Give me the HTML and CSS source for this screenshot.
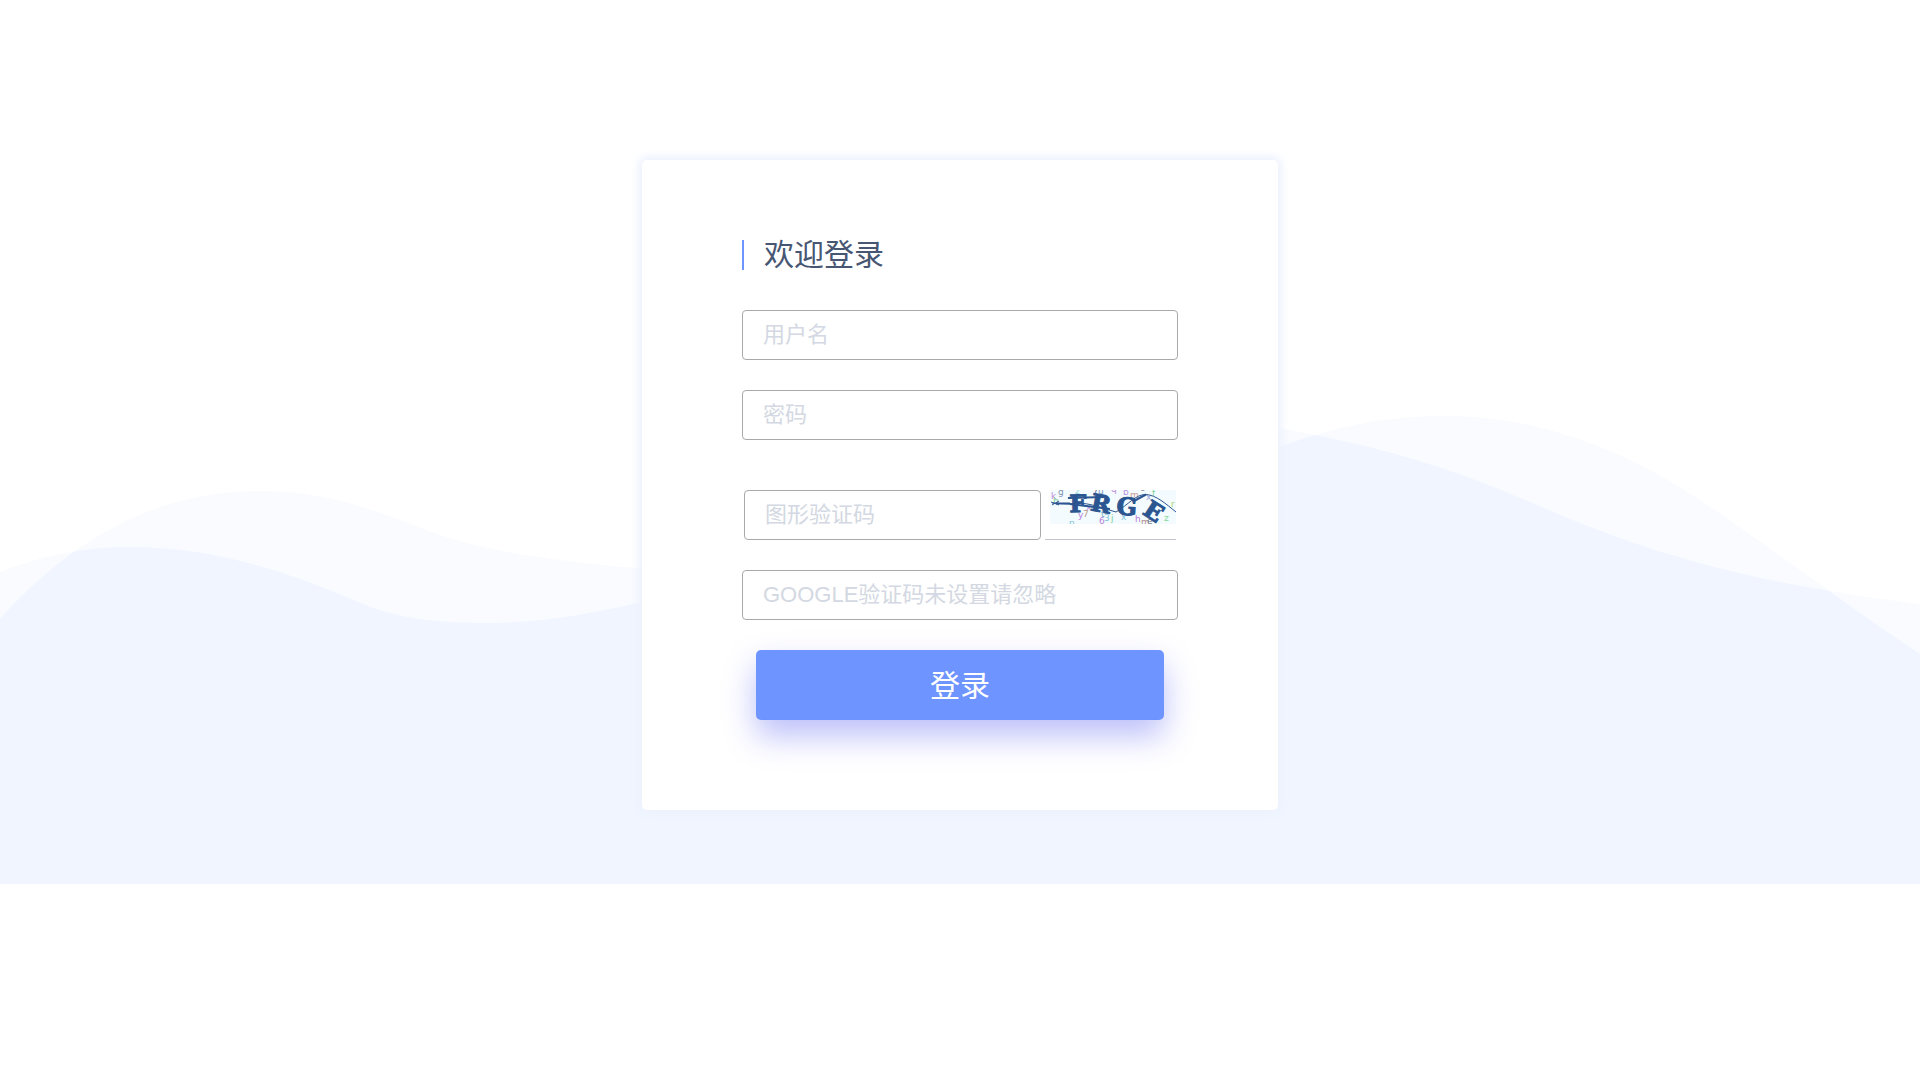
FILE: index.html
```html
<!DOCTYPE html>
<html lang="zh-CN">
<head>
    <meta charset="UTF-8">
    <meta name="viewport" content="width=device-width, initial-scale=1.0">
    <title>登录</title>
    <link rel="stylesheet" href="styles.css">
</head>
<body>
    <!-- Background waves -->
    <svg class="waves" viewBox="0 0 1920 884" aria-hidden="true">
        <defs>
            <path id="waveA" d="M0 619C80 530 165 491 263 491C325 491 378 511 421 528C470 548 540 560 636 568C850 580 1080 390 1284 429C1357 442 1430 461 1496 488C1590 526 1680 575 1920 604V884H0Z"/>
            <path id="waveB" d="M0 572C45 554 88 547 130 547C210 547 285 570 358 602C395 618 435 623 485 623C540 623 590 614 638 603C850 550 1100 500 1285 445C1340 425 1390 416 1445 416C1540 416 1620 450 1681 488C1760 538 1835 598 1920 654V884H0Z"/>
            <clipPath id="clipA"><use href="#waveA"/></clipPath>
        </defs>
        <use class="wave-light" href="#waveA"/>
        <use class="wave-light" href="#waveB"/>
        <use class="wave-deep" href="#waveB" clip-path="url(#clipA)"/>
    </svg>

    <main class="login-box">
        <h1 class="title">欢迎登录</h1>
        <form class="login-form">
            <input class="field" type="text" name="username" placeholder="用户名" aria-label="用户名">
            <input class="field" type="password" name="password" placeholder="密码" aria-label="密码">
            <div class="captcha-row">
                <input class="field" type="text" name="captcha" placeholder="图形验证码" aria-label="图形验证码">
                <button class="captcha" type="button" aria-label="刷新验证码">
                    <svg width="126" height="34" viewBox="0 0 126 34">
                        <rect width="126" height="34" fill="#f3fbfe"/>
                        <g class="noise">
                            <text x="1" y="9" fill="#c08bdc">k</text>
                            <text x="3" y="14" fill="#7fd09a">h</text>
                            <text x="8" y="5" fill="#8094b4">g</text>
                            <text x="25" y="4" fill="#8ccfd4">z</text>
                            <text x="42" y="6" fill="#7d6f96">7</text>
                            <text x="48" y="4" fill="#7a9cc4">u</text>
                            <text x="61" y="2" fill="#c08bdc">q</text>
                            <text x="73" y="5" fill="#b994e0">b</text>
                            <text x="80" y="8" fill="#c99a92">m</text>
                            <text x="90" y="1" fill="#8a8a9a">o</text>
                            <text x="102" y="6" fill="#7fd09a">f</text>
                            <text x="121" y="17" fill="#a4d86c">r</text>
                            <text x="96" y="10" fill="#9aa4e0">x</text>
                            <text x="36" y="20" fill="#c08bdc">x</text>
                            <text x="28" y="28" fill="#b97fd8">y</text>
                            <text x="33" y="27" fill="#b99a8c">7</text>
                            <text x="19" y="36" fill="#7fc4dc">n</text>
                            <text x="51" y="27" fill="#6fa8c8">t</text>
                            <text x="49" y="34" fill="#b97fd8">6</text>
                            <text x="54" y="31" fill="#7fc4dc">3</text>
                            <text x="61" y="31" fill="#7fd09a">j</text>
                            <text x="71" y="30" fill="#7fc4dc">x</text>
                            <text x="85" y="32" fill="#b97fd8">h</text>
                            <text x="91" y="35" fill="#b08a8a">m</text>
                            <text x="97" y="34" fill="#6f7f8f">e</text>
                            <text x="114" y="31" fill="#7fdc9a">z</text>
                        </g>
                        <path class="strike" d="M1 12L9 15M2 15L9 11M2 13L20 14C36 11 48 17 66 22C78 15 86 4 96 4.500C106 5 116 14 126 22"/>
                        <path class="strike-bold" d="M6 13.500L20 13.500M18 8L54 7M20 14L60 19M84 11L96 4.500"/>
                        <g class="code">
                            <text x="28" y="22" transform="rotate(-1 28 14)">F</text>
                            <text x="51" y="22" transform="rotate(10 51 14)">R</text>
                            <text x="77" y="25" transform="rotate(4 77 15)">G</text>
                            <text x="104" y="30" transform="rotate(33 104 21)">E</text>
                        </g>
                    </svg>
                </button>
            </div>
            <input class="field" type="text" name="google" placeholder="GOOGLE验证码未设置请忽略" aria-label="GOOGLE验证码">
            <button class="submit" type="submit">登录</button>
        </form>
    </main>
</body>
</html>
```
FILE: styles.css
```css
* {
    box-sizing: border-box;
}
body {
    margin: 0;
    min-height: 100vh;
    padding: 160px 20px;
    background-color: #fff;
    font-family: "Liberation Sans", "Noto Sans CJK SC", sans-serif;
}
.waves {
    position: absolute;
    top: 0;
    left: 0;
    z-index: -1;
    width: 100%;
    height: auto;
}
.wave-light {
    fill: #f9fbff;
}
.wave-deep {
    fill: #f0f5ff;
}
.login-box {
    max-width: 636px;
    margin: 0 auto;
    padding: 80px 100px 90px;
    background-color: #fff;
    border-radius: 5px;
    box-shadow: 0 0 8px 4px #edf2fd;
}
.title {
    margin: 0 0 40px;
    padding-left: 20px;
    border-left: 2px solid #6e94ff;
    color: #475672;
    font-size: 30px;
    font-weight: 400;
    line-height: 30px;
}
.login-form {
    display: flex;
    flex-direction: column;
    gap: 30px;
}
.field {
    width: 100%;
    height: 50px;
    padding: 0 20px;
    background-color: #fff;
    border: 1px solid #a9a9a9;
    border-radius: 4px;
    color: #475672;
    font-family: inherit;
    font-size: 22px;
}
.field::placeholder {
    color: #d3d8e2;
}
.captcha-row {
    display: flex;
    gap: 4px;
    margin: 20px 2px 0;
}
.captcha-row .field {
    flex: 1;
    min-width: 0;
}
.captcha {
    display: flex;
    align-items: flex-start;
    height: 50px;
    padding: 0 0 0 5px;
    background: none;
    border: 0;
    border-bottom: 1px solid #c4c6cf;
    cursor: pointer;
}
.noise {
    font-family: "DejaVu Sans", sans-serif;
    font-size: 9px;
}
.code {
    fill: #2b5590;
    stroke: #2b5590;
    stroke-width: 1;
    font-family: "DejaVu Serif", serif;
    font-size: 24px;
    font-weight: 700;
    text-anchor: middle;
}
.strike,
.strike-bold {
    fill: none;
    stroke: #2b5590;
    stroke-width: 1;
}
.strike-bold {
    stroke-width: 2;
}
.submit {
    height: 70px;
    margin: 0 14px;
    padding: 0 0 4px;
    background-color: #6e94ff;
    border: 0;
    border-radius: 5px;
    box-shadow: 0 16px 32px rgba(88, 96, 240, 0.4);
    color: #fff;
    font-family: inherit;
    font-size: 30px;
    cursor: pointer;
}
```
